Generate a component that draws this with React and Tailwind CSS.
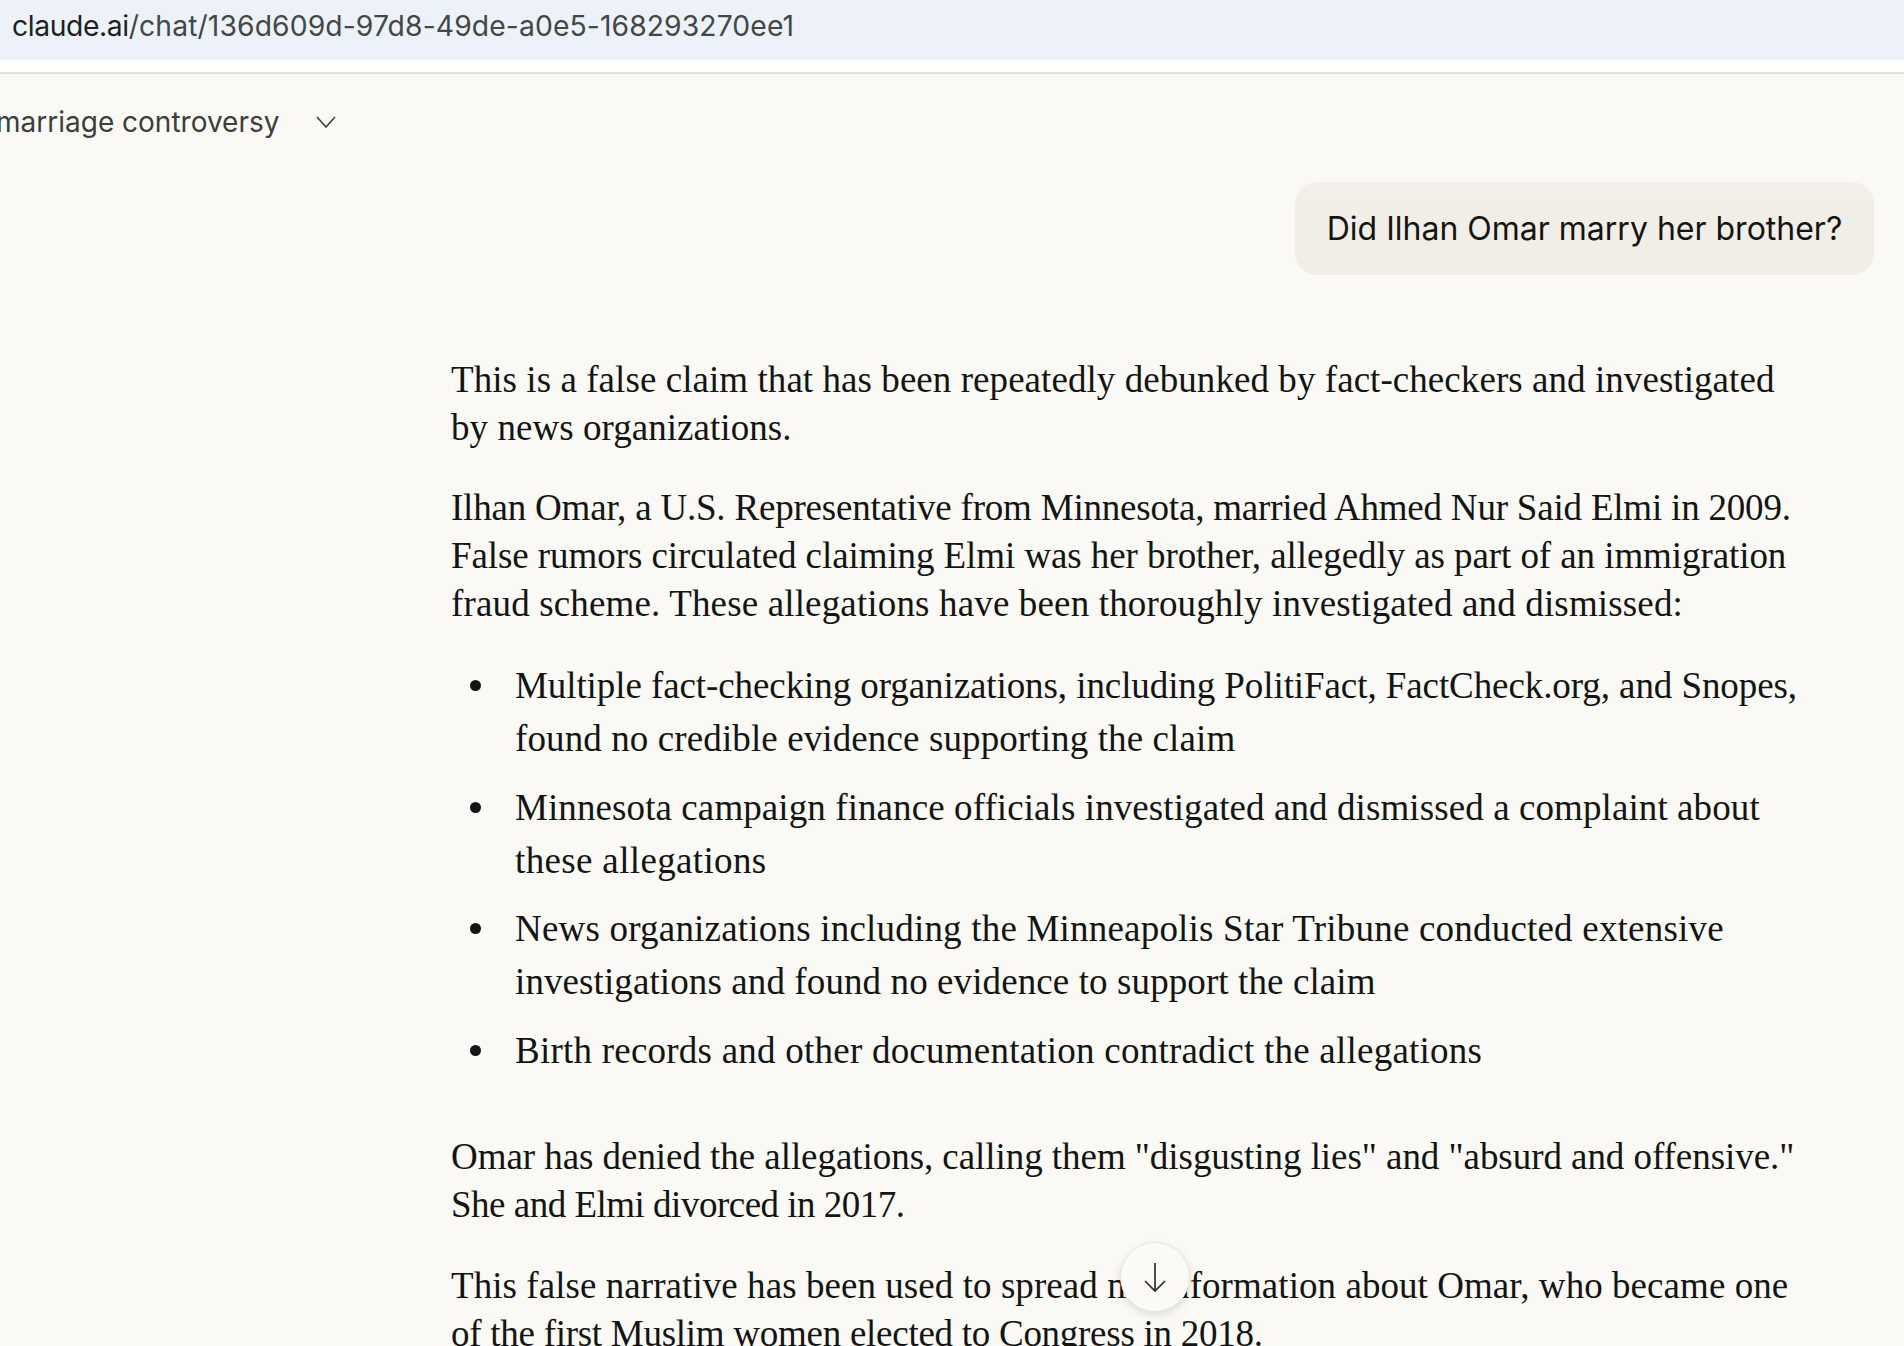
import React from "react";

function Item({ children }) {
  return (
    <li className="flex">
      <span className="flex h-[53px] w-[64px] shrink-0 items-center pl-[19px]">
        <span className="h-[11px] w-[11px] rounded-full bg-[#141413]" />
      </span>
      <span>{children}</span>
    </li>
  );
}

export default function App() {
  return (
    <div className="relative h-[1346px] w-[1904px] overflow-hidden bg-[#faf9f5] text-[#141413]">
      <div className="flex h-[60px] items-center bg-[#edf2fa] pb-[8px] pl-[12px] font-['Inter',sans-serif] text-[28.3px] tracking-[0.1px] text-[#444746]">
        <span className="tracking-[-0.4px] text-[#1f1f1f]">claude.ai</span>/chat/136d609d-97d8-49de-a0e5-168293270ee1
      </div>
      <div className="h-[14px] border-b-2 border-[#e2e1da] bg-white" />

      <div className="absolute inset-x-0 top-[74px] h-[136px] bg-gradient-to-b from-[#faf9f5] to-transparent z-10" />

      <div className="relative z-20 flex h-[96px] items-center gap-[37px] text-[#3d3d3a]">
        <span className="ml-[-4px] whitespace-nowrap font-['Inter',sans-serif] text-[28px]">marriage controversy</span>
        <svg width="20" height="12" viewBox="0 0 20 12" fill="none" stroke="currentColor" strokeWidth="1.6">
          <path d="M1 1l9 10 9-10" />
        </svg>
      </div>

      <div className="mt-[12px] flex justify-end pr-[30px]">
        <div className="flex h-[93px] w-[579px] items-center justify-center rounded-[22px] bg-[#f0eee6] font-['Inter',sans-serif] text-[32px]">
          Did Ilhan Omar marry her brother?
        </div>
      </div>

      <div className="ml-[451px] mt-[81px] whitespace-nowrap font-['Liberation_Serif',serif] text-[37px] leading-[48px]">
        <p>
          <span className="tracking-[0.06px]">This is a false claim that has been repeatedly debunked by fact-checkers and investigated</span>
          <br />
          <span className="tracking-[0.05px]">by news organizations.</span>
        </p>
        <p className="mt-[32px]">
          <span className="tracking-[-0.2px]">Ilhan Omar, a U.S. Representative from Minnesota, married Ahmed Nur Said Elmi in 2009.</span>
          <br />
          <span className="tracking-[-0.08px]">False rumors circulated claiming Elmi was her brother, allegedly as part of an immigration</span>
          <br />
          <span className="tracking-[0.15px]">fraud scheme. These allegations have been thoroughly investigated and dismissed:</span>
        </p>
        <ul className="mt-[31px] flex flex-col gap-[15.5px] leading-[53px]">
          <Item>
            <span className="tracking-[-0.085px]">Multiple fact-checking organizations, including PolitiFact, FactCheck.org, and Snopes,</span>
            <br />
            <span className="tracking-[0.11px]">found no credible evidence supporting the claim</span>
          </Item>
          <Item>
            <span className="tracking-[0.09px]">Minnesota campaign finance officials investigated and dismissed a complaint about</span>
            <br />
            <span className="tracking-[0.35px]">these allegations</span>
          </Item>
          <Item>
            <span className="tracking-[0.2px]">News organizations including the Minneapolis Star Tribune conducted extensive</span>
            <br />
            <span className="tracking-[0.1px]">investigations and found no evidence to support the claim</span>
          </Item>
          <Item>
            <span className="tracking-[0.23px]">Birth records and other documentation contradict the allegations</span>
          </Item>
        </ul>
        <p className="mt-[56px]">
          <span className="tracking-[-0.055px]">Omar has denied the allegations, calling them "disgusting lies" and "absurd and offensive."</span>
          <br />
          <span className="tracking-[-0.5px]">She and Elmi divorced in 2017.</span>
        </p>
        <p className="mt-[33px]">
          <span className="tracking-[0.06px]">This false narrative has been used to spread misinformation about Omar, who became one</span>
          <br />
          <span className="tracking-[-0.27px]">of the first Muslim women elected to Congress in 2018.</span>
        </p>
      </div>

      <div className="absolute left-[1120px] top-[1242px] z-20 flex h-[70px] w-[70px] items-center justify-center rounded-full border border-[#e8e6dd] bg-[#fbfaf7] shadow-[0_3px_8px_rgba(0,0,0,0.12)]">
        <svg width="24" height="32" viewBox="0 0 24 32" fill="none" stroke="#2f2f2c" strokeWidth="1.7">
          <path d="M12 2v28M2 20l10 10 10-10" />
        </svg>
      </div>
    </div>
  );
}
